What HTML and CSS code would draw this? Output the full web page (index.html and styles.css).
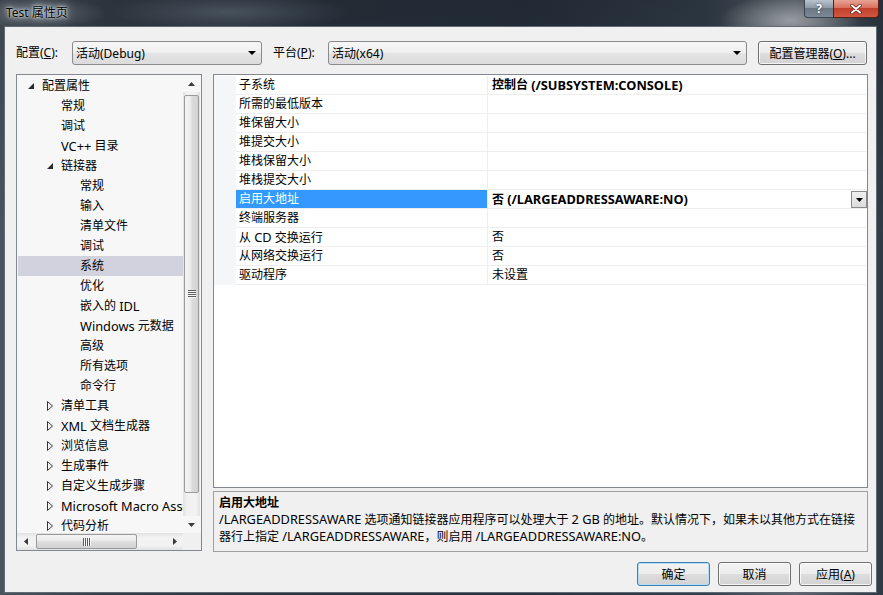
FILE: index.html
```html
<!DOCTYPE html>
<html lang="zh-CN">
<head>
<meta charset="utf-8">
<title>Test 属性页</title>
<link rel="stylesheet" href="styles.css">
</head>
<body>
<div class="window">
  <div class="titlebar">
    <span class="title">Test 属性页</span>
    <div class="caption">
      <div class="cbtn help">?</div>
      <div class="cbtn close">
        <svg width="12" height="10" viewBox="0 0 12 10"><path d="M2 1.5 L10 8.5 M10 1.5 L2 8.5" stroke="#5a1a10" stroke-width="3.4" stroke-linecap="round"/><path d="M2 1.5 L10 8.5 M10 1.5 L2 8.5" stroke="#ffffff" stroke-width="2" stroke-linecap="round"/></svg>
      </div>
    </div>
  </div>
  <div class="client">
    <div class="toolbar">
      <span class="tlabel lab-cfg">配置(<u>C</u>):</span>
      <div class="combo combo-cfg"><span class="ctext">活动(Debug)</span><svg class="carrow" width="8" height="4" viewBox="0 0 8 4"><polygon points="0,0 8,0 4,4" fill="#000"/></svg></div>
      <span class="tlabel lab-plat">平台(<u>P</u>):</span>
      <div class="combo combo-plat"><span class="ctext">活动(x64)</span><svg class="carrow" width="8" height="4" viewBox="0 0 8 4"><polygon points="0,0 8,0 4,4" fill="#000"/></svg></div>
      <div class="btn mgr">配置管理器(<u>O</u>)...</div>
    </div>
    <div class="main">
      <div class="tree">
        <div class="tree-body">
          <div class="tree-list">
            <div class="node lv0"><span class="exp"><svg width="6" height="6" viewBox="0 0 6 6"><polygon points="6,0 6,6 0,6" fill="#2a2a2a"/></svg></span>配置属性</div>
            <div class="node lv1"><span class="exp"></span>常规</div>
            <div class="node lv1"><span class="exp"></span>调试</div>
            <div class="node lv1"><span class="exp"></span><span class="en">VC++</span>&nbsp;目录</div>
            <div class="node lv1"><span class="exp"><svg width="6" height="6" viewBox="0 0 6 6"><polygon points="6,0 6,6 0,6" fill="#2a2a2a"/></svg></span>链接器</div>
            <div class="node lv2"><span class="exp"></span>常规</div>
            <div class="node lv2"><span class="exp"></span>输入</div>
            <div class="node lv2"><span class="exp"></span>清单文件</div>
            <div class="node lv2"><span class="exp"></span>调试</div>
            <div class="node lv2 sel"><span class="exp"></span>系统</div>
            <div class="node lv2"><span class="exp"></span>优化</div>
            <div class="node lv2"><span class="exp"></span>嵌入的&nbsp;<span class="en">IDL</span></div>
            <div class="node lv2"><span class="exp"></span><span class="en">Windows</span>&nbsp;元数据</div>
            <div class="node lv2"><span class="exp"></span>高级</div>
            <div class="node lv2"><span class="exp"></span>所有选项</div>
            <div class="node lv2"><span class="exp"></span>命令行</div>
            <div class="node lv1"><span class="exp"><svg width="6" height="10" viewBox="0 0 6 10"><polygon points="0.5,0.5 5.5,5 0.5,9.5" fill="none" stroke="#333"/></svg></span>清单工具</div>
            <div class="node lv1"><span class="exp"><svg width="6" height="10" viewBox="0 0 6 10"><polygon points="0.5,0.5 5.5,5 0.5,9.5" fill="none" stroke="#333"/></svg></span><span class="en">XML</span>&nbsp;文档生成器</div>
            <div class="node lv1"><span class="exp"><svg width="6" height="10" viewBox="0 0 6 10"><polygon points="0.5,0.5 5.5,5 0.5,9.5" fill="none" stroke="#333"/></svg></span>浏览信息</div>
            <div class="node lv1"><span class="exp"><svg width="6" height="10" viewBox="0 0 6 10"><polygon points="0.5,0.5 5.5,5 0.5,9.5" fill="none" stroke="#333"/></svg></span>生成事件</div>
            <div class="node lv1"><span class="exp"><svg width="6" height="10" viewBox="0 0 6 10"><polygon points="0.5,0.5 5.5,5 0.5,9.5" fill="none" stroke="#333"/></svg></span>自定义生成步骤</div>
            <div class="node lv1"><span class="exp"><svg width="6" height="10" viewBox="0 0 6 10"><polygon points="0.5,0.5 5.5,5 0.5,9.5" fill="none" stroke="#333"/></svg></span><span class="en">Microsoft Macro Assembler</span></div>
            <div class="node lv1"><span class="exp"><svg width="6" height="10" viewBox="0 0 6 10"><polygon points="0.5,0.5 5.5,5 0.5,9.5" fill="none" stroke="#333"/></svg></span>代码分析</div>
          </div>
          <div class="vscroll">
            <div class="sarrow"><svg width="7" height="4" viewBox="0 0 7 4"><polygon points="0,4 3.5,0 7,4" fill="#3a3a3a"/></svg></div>
            <div class="vtrack">
              <div class="vthumb">
                <svg width="8" height="8" viewBox="0 0 8 8"><path d="M0 0.5H8M0 2.5H8M0 4.5H8M0 6.5H8" stroke="#5c5c5c"/><path d="M0 1.5H8M0 3.5H8M0 5.5H8M0 7.5H8" stroke="#fafafa"/></svg>
              </div>
            </div>
            <div class="sarrow"><svg width="7" height="4" viewBox="0 0 7 4"><polygon points="0,0 7,0 3.5,4" fill="#3a3a3a"/></svg></div>
          </div>
        </div>
        <div class="hrow">
          <div class="hscroll">
            <div class="sarrow"><svg width="4" height="7" viewBox="0 0 4 7"><polygon points="4,0 4,7 0,3.5" fill="#3a3a3a"/></svg></div>
            <div class="htrack">
              <div class="hthumb">
                <svg width="8" height="8" viewBox="0 0 8 8"><path d="M0.5 0V8M2.5 0V8M4.5 0V8M6.5 0V8" stroke="#5c5c5c"/><path d="M1.5 0V8M3.5 0V8M5.5 0V8M7.5 0V8" stroke="#fafafa"/></svg>
              </div>
            </div>
            <div class="sarrow"><svg width="4" height="7" viewBox="0 0 4 7"><polygon points="0,0 4,3.5 0,7" fill="#3a3a3a"/></svg></div>
          </div>
          <div class="corner"></div>
        </div>
      </div>
      <div class="right">
        <div class="grid">
          <div class="prow"><div class="gut"></div><div class="pname">子系统</div><div class="pval b">控制台&nbsp;<span class="en">(/SUBSYSTEM:CONSOLE)</span></div></div>
          <div class="prow"><div class="gut"></div><div class="pname">所需的最低版本</div><div class="pval"></div></div>
          <div class="prow"><div class="gut"></div><div class="pname">堆保留大小</div><div class="pval"></div></div>
          <div class="prow"><div class="gut"></div><div class="pname">堆提交大小</div><div class="pval"></div></div>
          <div class="prow"><div class="gut"></div><div class="pname">堆栈保留大小</div><div class="pval"></div></div>
          <div class="prow"><div class="gut"></div><div class="pname">堆栈提交大小</div><div class="pval"></div></div>
          <div class="prow sel"><div class="gut"></div><div class="pname">启用大地址</div><div class="pval b"><span class="vtext">否&nbsp;<span class="en">(/LARGEADDRESSAWARE:NO)</span></span><span class="dd"><svg width="7" height="4" viewBox="0 0 7 4"><polygon points="0,0 7,0 3.5,4" fill="#000"/></svg></span></div></div>
          <div class="prow"><div class="gut"></div><div class="pname">终端服务器</div><div class="pval"></div></div>
          <div class="prow"><div class="gut"></div><div class="pname">从&nbsp;<span class="en">CD</span>&nbsp;交换运行</div><div class="pval">否</div></div>
          <div class="prow"><div class="gut"></div><div class="pname">从网络交换运行</div><div class="pval">否</div></div>
          <div class="prow"><div class="gut"></div><div class="pname">驱动程序</div><div class="pval">未设置</div></div>
        </div>
        <div class="desc">
          <div class="dtitle">启用大地址</div>
          <div class="dtext"><span class="en">/LARGEADDRESSAWARE</span> 选项通知链接器应用程序可以处理大于 <span class="en">2 GB</span> 的地址。默认情况下，如果未以其他方式在链接<br>器行上指定 <span class="en">/LARGEADDRESSAWARE</span>，则启用 <span class="en">/LARGEADDRESSAWARE:NO</span>。</div>
        </div>
      </div>
    </div>
    <div class="buttons">
      <div class="btn dlg default">确定</div>
      <div class="btn dlg">取消</div>
      <div class="btn dlg">应用(<u>A</u>)</div>
    </div>
  </div>
</div>
</body>
</html>
```

FILE: styles.css
```css
html, body {
  margin: 0;
  padding: 0;
}
body {
  width: 883px;
  height: 595px;
  overflow: hidden;
  font-family: "Noto Sans", "Noto Sans CJK SC", sans-serif;
  font-size: 12px;
  color: #000;
}
u { text-decoration: underline; text-underline-offset: 1px; }
.en { font-size: 12.8px; }

.window {
  width: 883px;
  height: 595px;
  display: flex;
  flex-direction: column;
  background:
    linear-gradient(180deg, rgba(0,0,0,0.18) 0%, rgba(0,0,0,0) 40%),
    radial-gradient(ellipse 70px 16px at 38px 13px, rgba(150,158,166,0.55), rgba(150,158,166,0) 100%),
    radial-gradient(ellipse 120px 20px at 230px 12px, rgba(160,175,190,0.35), rgba(160,175,190,0) 100%),
    radial-gradient(ellipse 70px 26px at 790px 20px, rgba(210,215,220,0.75), rgba(210,215,220,0) 100%),
    linear-gradient(90deg, #4a545e 0%, #353f4a 12%, #2a3540 35%, #28333f 60%, #34404c 80%, #5d6670 90%, #2f3a46 100%);
}

/* title bar */
.titlebar {
  height: 26px;
  display: flex;
  align-items: flex-start;
}
.title {
  margin-left: 6px;
  line-height: 26px;
  font-size: 12px;
  color: #000;
  text-shadow: 0 0 2px #e6e9ec, 0 0 4px #d6dade, 0 0 8px #b6bdc4, 0 0 12px #a0a8b0;
}
.caption {
  margin-left: auto;
  margin-right: 4px;
  display: flex;
}
.cbtn {
  height: 18px;
  box-sizing: border-box;
  display: flex;
  align-items: center;
  justify-content: center;
  border: 1px solid #3a4550;
  border-top: none;
}
.help {
  width: 29px;
  border-radius: 0 0 0 4px;
  border-right: none;
  background: linear-gradient(180deg, #b9c3cd 0%, #8e9aa6 45%, #6c7886 50%, #7c8896 100%);
  color: #fff;
  font-weight: bold;
  font-size: 12px;
  text-shadow: 0 0 2px #223;
}
.close {
  width: 46px;
  border-radius: 0 0 4px 0;
  border-color: #5a2018;
  background: linear-gradient(180deg, #e7a494 0%, #d9725e 45%, #c2402c 50%, #d0573f 100%);
}

/* client area */
.client {
  flex: 1;
  margin: 0 6px 2px 4px;
  background: #f0f0f0;
  border: 1px solid #5f6a75;
  padding: 14px 8px 0 11px;
  display: flex;
  flex-direction: column;
}

.toolbar {
  height: 24px;
  display: flex;
  align-items: center;
}
.tlabel { line-height: 24px; white-space: nowrap; }
.lab-cfg { width: 56px; }
.lab-plat { width: 55px; margin-left: 11px; }
.combo {
  height: 24px;
  box-sizing: border-box;
  border: 1px solid #8a8a8a;
  border-radius: 3px;
  background: linear-gradient(180deg, #f6f6f6 0%, #efefef 50%, #e4e4e4 50%, #dcdcdc 100%);
  display: flex;
  align-items: center;
  padding: 0 5px 0 3px;
}
.combo-cfg { width: 190px; }
.combo-plat { flex: 1; }
.ctext { flex: 1; }
.carrow { display: block; }

.btn {
  height: 24px;
  box-sizing: border-box;
  border: 1px solid #707070;
  border-radius: 3px;
  background: linear-gradient(180deg, #f3f3f3 0%, #ececec 50%, #dedede 50%, #d2d2d2 100%);
  box-shadow: inset 0 0 0 1px rgba(255,255,255,0.75);
  display: flex;
  align-items: center;
  justify-content: center;
  white-space: nowrap;
}
.mgr { width: 109px; margin-left: 11px; margin-right: 1px; }

/* main */
.main {
  margin-top: 9px;
  height: 478px;
  display: flex;
  align-items: flex-start;
}
.tree {
  width: 186px;
  height: 477px;
  box-sizing: border-box;
  border: 1px solid #828790;
  background: #f7f7f7;
  display: flex;
  flex-direction: column;
}
.tree-body {
  height: 458px;
  display: flex;
}
.tree-list {
  width: 166px;
  flex: none;
  overflow: hidden;
  padding-top: 1px;
}
.node {
  width: 165px;
  box-sizing: border-box;
  height: 20px;
  line-height: 20px;
  display: flex;
  align-items: center;
  white-space: nowrap;
  margin-left: 1px;
}
.node.lv0 { padding-left: 10px; }
.node.lv1 { padding-left: 29px; }
.node.lv2 { padding-left: 48px; }
.node.sel { background: #d1d2dd; }
.exp {
  width: 14px;
  flex: none;
  display: flex;
  align-items: center;
}
.exp svg { display: block; }

.vscroll {
  width: 17px;
  display: flex;
  flex-direction: column;
}
.sarrow {
  width: 17px;
  height: 17px;
  flex: none;
  display: flex;
  align-items: center;
  justify-content: center;
}
.sarrow svg { display: block; }
.vtrack {
  flex: 1;
  background: linear-gradient(90deg, #e2e2e2 0%, #f2f2f2 25%, #f2f2f2 75%, #e2e2e2 100%);
  padding: 3px 1px 0 1px;
}
.vthumb {
  height: 398px;
  box-sizing: border-box;
  border: 1px solid #9a9a9a;
  border-radius: 2px;
  background: linear-gradient(90deg, #f4f4f4 0%, #ececec 40%, #dcdcdc 55%, #d2d2d2 100%);
  display: flex;
  align-items: center;
  justify-content: center;
}
.vthumb svg, .hthumb svg { display: block; }

.hrow {
  height: 17px;
  display: flex;
}
.hscroll {
  width: 166px;
  flex: none;
  display: flex;
  background: linear-gradient(180deg, #e2e2e2 0%, #f2f2f2 25%, #f2f2f2 75%, #e2e2e2 100%);
}
.htrack {
  flex: 1;
  padding: 1px 0 1px 2px;
  display: flex;
}
.hthumb {
  width: 101px;
  box-sizing: border-box;
  border: 1px solid #9a9a9a;
  border-radius: 2px;
  background: linear-gradient(180deg, #f4f4f4 0%, #ececec 40%, #dcdcdc 55%, #d2d2d2 100%);
  display: flex;
  align-items: center;
  justify-content: center;
}
.corner { flex: 1; background: #f0f0f0; }

.right {
  flex: 1;
  margin-left: 11px;
  height: 478px;
  display: flex;
  flex-direction: column;
}
.grid {
  height: 414px;
  box-sizing: border-box;
  border: 1px solid #828790;
  background: #fff;
  padding-top: 1px;
}
.prow {
  height: 19px;
  display: flex;
}
.gut {
  width: 22px;
  flex: none;
  background: #f5f6f8;
}
.pname {
  width: 248px;
  flex: none;
  padding-left: 3px;
  line-height: 18px;
  border-bottom: 1px solid #eeeeee;
  border-right: 1px solid #eeeeee;
  white-space: nowrap;
}
.pval {
  flex: 1;
  padding-left: 4px;
  line-height: 18px;
  border-bottom: 1px solid #eeeeee;
  white-space: nowrap;
  display: flex;
  align-items: center;
}
.pval.b { font-weight: 700; }
.prow.sel .pname { background: #3399ff; color: #fff; }
.vtext { flex: 1; }
.dd {
  width: 16px;
  height: 17px;
  box-sizing: border-box;
  border: 1px solid #8a8a8a;
  background: linear-gradient(180deg, #f0f0f0, #dcdcdc);
  display: flex;
  align-items: center;
  justify-content: center;
  align-self: flex-start;
  margin-top: 1px;
}
.dd svg { display: block; }

.desc {
  margin-top: 3px;
  height: 61px;
  box-sizing: border-box;
  border: 1px solid #a0a0a0;
  background: #f0f0f0;
  padding: 2px 0 0 5px;
  line-height: 17px;
}
.dtitle { font-weight: 700; }
.dtext { white-space: nowrap; }

/* bottom buttons */
.buttons {
  margin-top: 10px;
  margin-right: -4px;
  height: 24px;
  display: flex;
  justify-content: flex-end;
  gap: 8px;
}
.btn.dlg { width: 73px; }
.btn.default {
  border-color: #3c7fb1;
  box-shadow: inset 0 0 0 1px #b4def5;
}
```
